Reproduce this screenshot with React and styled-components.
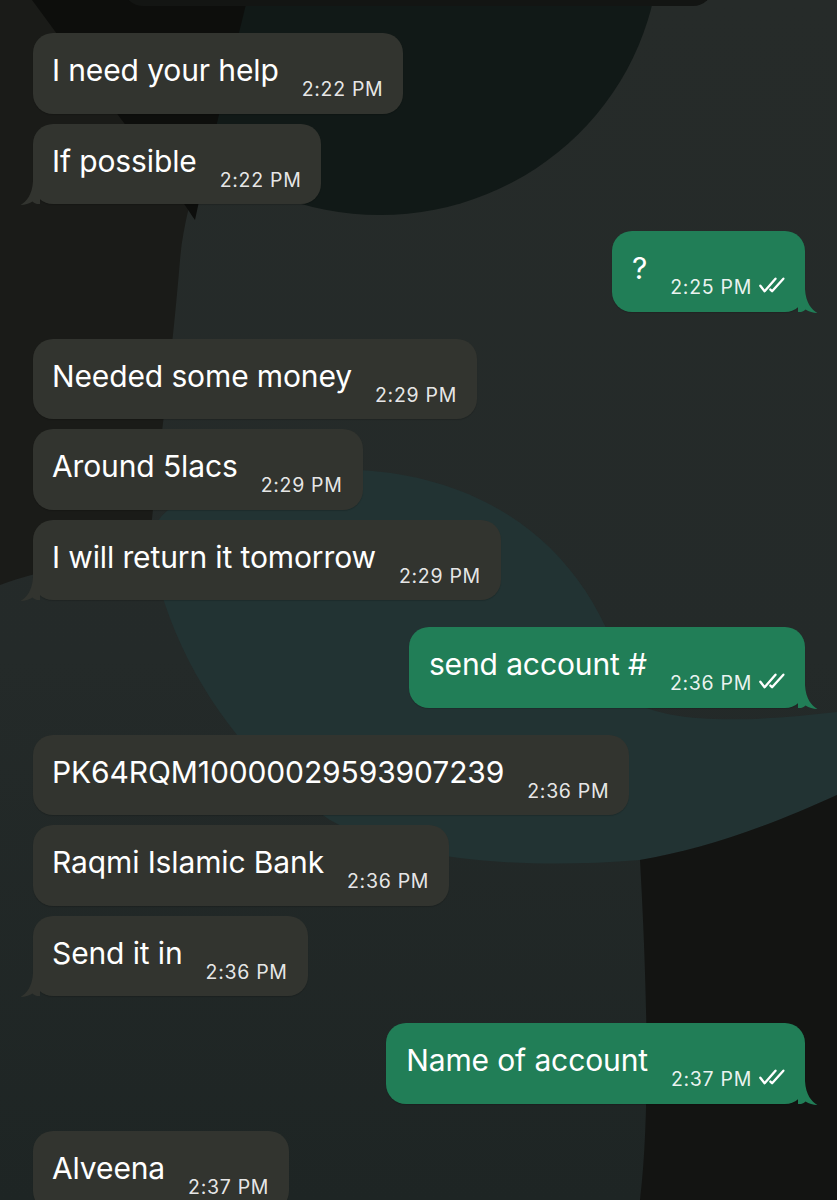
import React from 'react';
import styled, { createGlobalStyle } from 'styled-components';

const GlobalStyle = createGlobalStyle`
  body {
    margin: 0;
    background: #1f2524;
    font-family: Inter, "Noto Sans", sans-serif;
  }
`;

const Screen = styled.div`
  position: relative;
  width: 837px;
  height: 1200px;
  overflow: hidden;
  background: linear-gradient(180deg, #262b29 0%, #242a29 55%, #1e2524 100%);
`;

const Wallpaper = styled.svg`
  position: absolute;
  inset: 0;
  width: 837px;
  height: 1200px;
  z-index: 0;
`;

const Thread = styled.div`
  position: relative;
  z-index: 1;
  display: flex;
  flex-direction: column;
  padding: 0 32px 0 33px;
`;

const PrevBubble = styled.div`
  margin: -74px 0 0 90px;
  width: 590px;
  height: 80px;
  border-radius: 20px;
  background: #131513;
`;

const Group = styled.div`
  display: flex;
  flex-direction: column;
  align-items: ${({ $out }) => ($out ? 'flex-end' : 'flex-start')};
  gap: 10px;
  margin-top: 27px;
`;

const Bubble = styled.div`
  position: relative;
  display: inline-flex;
  align-items: flex-end;
  padding: ${({ $out }) => ($out ? '19px 18px 13.5px 20px' : '19px 20px 13.5px 19px')};
  border-radius: 20px;
  background: ${({ $out }) => ($out ? '#217e57' : '#32342f')};
  color: #fff;
  box-shadow: 0 1px 1px rgba(0, 0, 0, 0.15);
`;

const Text = styled.span`
  font-size: 30px;
  line-height: 36px;
  letter-spacing: -0.12px;
  margin-bottom: 12px;
  white-space: nowrap;
`;

const Meta = styled.span`
  display: inline-flex;
  align-items: flex-end;
  gap: 6px;
  margin-left: 23px;
`;

const Time = styled.span`
  font-size: 19.5px;
  line-height: 22px;
  letter-spacing: 0.7px;
  white-space: nowrap;
  color: ${({ $out }) => ($out ? 'rgba(255, 255, 255, 0.92)' : 'rgba(255, 255, 255, 0.9)')};
`;

const Ticks = styled.svg`
  width: 29px;
  height: 16px;
  margin-bottom: 5px;
`;

const Tail = styled.svg`
  position: absolute;
  bottom: -1px;
  width: 20px;
  height: 24px;
  ${({ $out }) => ($out ? 'right: -13px; transform: scaleX(-1);' : 'left: -13px;')}
`;

const groups = [
  {
    out: false,
    items: [
      { text: 'I need your help', time: '2:22 PM' },
      { text: 'If possible', time: '2:22 PM' },
    ],
  },
  { out: true, items: [{ text: '?', time: '2:25 PM' }] },
  {
    out: false,
    items: [
      { text: 'Needed some money', time: '2:29 PM' },
      { text: 'Around 5lacs', time: '2:29 PM' },
      { text: 'I will return it tomorrow', time: '2:29 PM' },
    ],
  },
  { out: true, items: [{ text: 'send account #', time: '2:36 PM' }] },
  {
    out: false,
    items: [
      { text: 'PK64RQM10000029593907239', time: '2:36 PM' },
      { text: 'Raqmi Islamic Bank', time: '2:36 PM' },
      { text: 'Send it in', time: '2:36 PM' },
    ],
  },
  { out: true, items: [{ text: 'Name of account', time: '2:37 PM' }] },
  { out: false, items: [{ text: 'Alveena', time: '2:37 PM' }], open: true },
];

const TailShape = ({ out }) => (
  <Tail $out={out} viewBox="0 0 20 24">
    <path
      d="M13 0 L20 0 L20 23 L17 23 C15 22.5 13.5 21.5 12.5 20.5 C9 22.8 5 24 0.6 24 C6.5 20.5 12.2 14 13 0 Z"
      fill={out ? '#217e57' : '#32342f'}
    />
  </Tail>
);

// whatsapp style read receipt, two slanted checks
const DoubleTick = () => (
  <Ticks viewBox="0 0 26 15" fill="none" stroke="#fff" strokeWidth="2.2" strokeLinecap="round" strokeLinejoin="round">
    <path d="M1.6 8.2 L5.6 13.3 L15.8 1.6" />
    <path d="M11 11.8 L12.6 13.3 L23.2 1.6" />
  </Ticks>
);

const Message = ({ msg, out, tail }) => (
  <Bubble $out={out}>
    <Text>{msg.text}</Text>
    <Meta>
      <Time $out={out}>{msg.time}</Time>
      {out && <DoubleTick />}
    </Meta>
    {tail && <TailShape out={out} />}
  </Bubble>
);

export default function App() {
  return (
    <>
      <GlobalStyle />
      <Screen>
        <Wallpaper viewBox="0 0 837 1200">
          <path
            d="M0 0 L250 0 C215 120 185 200 180 260 C170 380 155 480 150 540 C100 560 40 570 0 585 Z"
            fill="#1a1b18"
          />
          <ellipse cx="380" cy="-60" rx="280" ry="275" fill="#111917" />
          <path d="M32 0 L247 0 C230 70 212 140 195 220 C170 180 120 120 32 0 Z" fill="#0d0e0c" />
          <path
            d="M150 545 C150 490 260 465 360 470 C500 478 600 560 630 700 C670 725 750 722 837 712 L837 795 C760 830 700 850 640 860 C520 870 400 860 330 820 C240 760 170 660 150 545 Z"
            fill="#223333"
          />
          <path d="M640 860 C645 950 652 1100 640 1200 L837 1200 L837 795 C760 830 700 850 640 860 Z" fill="#131412" />
        </Wallpaper>
        <Thread>
          <PrevBubble />
          {groups.map((g, gi) => (
            <Group key={gi} $out={g.out}>
              {g.items.map((m, mi) => (
                <Message
                  key={mi}
                  msg={m}
                  out={g.out}
                  tail={!g.open && mi === g.items.length - 1}
                />
              ))}
            </Group>
          ))}
        </Thread>
      </Screen>
    </>
  );
}
